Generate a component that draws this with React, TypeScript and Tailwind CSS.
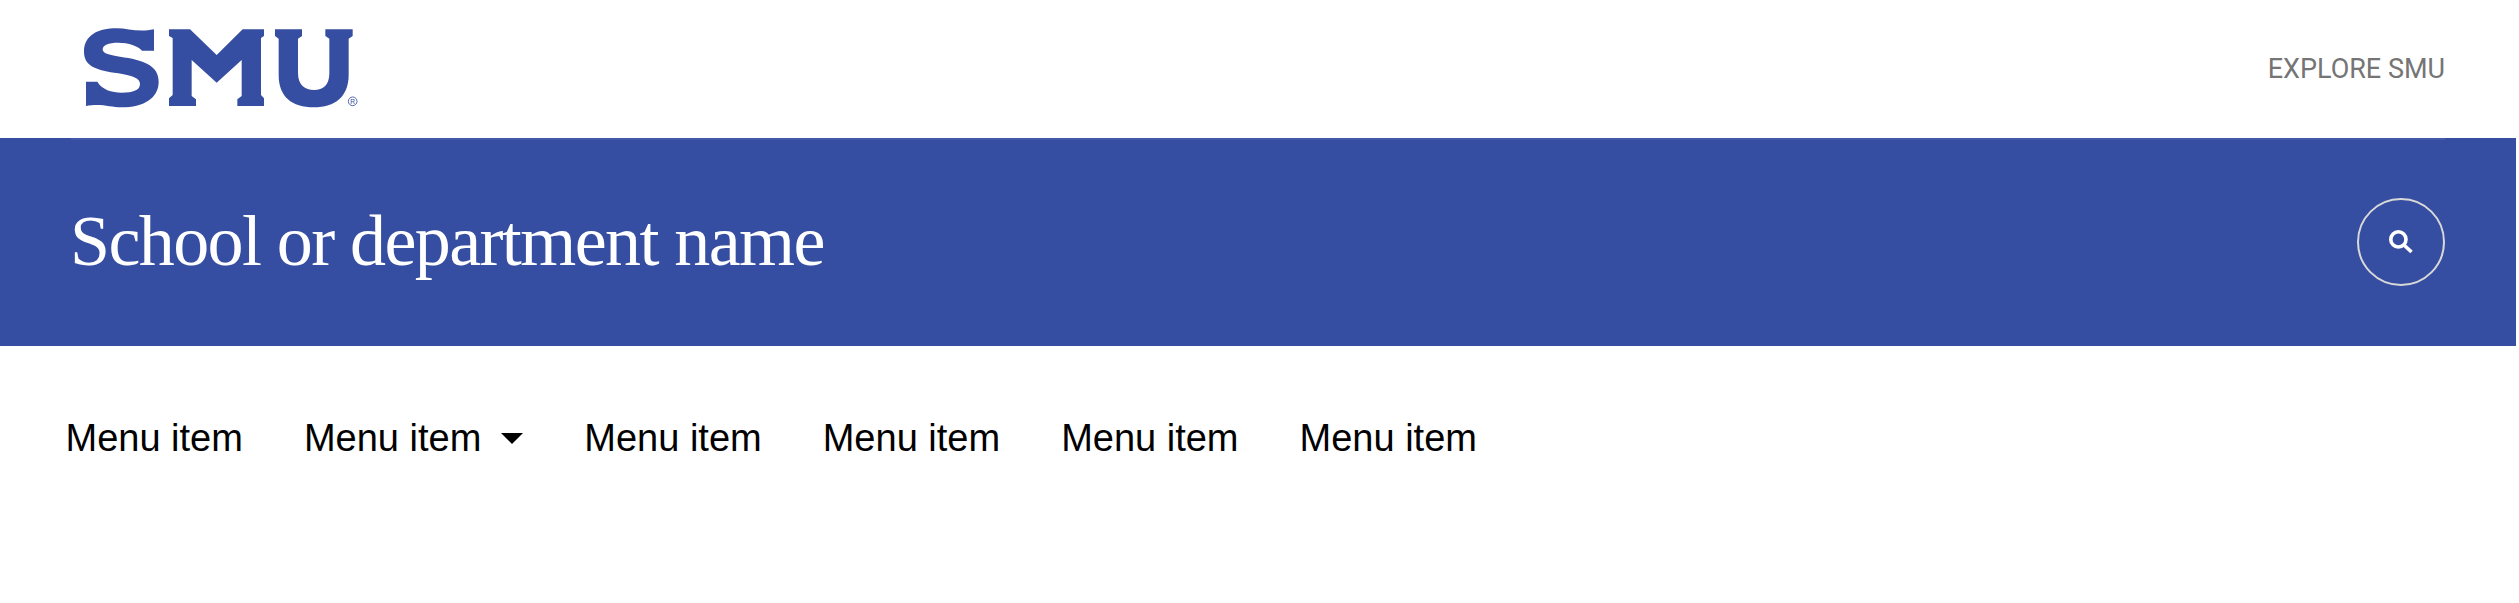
export default function App() {
  const items = ["Menu item", "Menu item", "Menu item", "Menu item", "Menu item", "Menu item"];
  return (
    <div className="h-[603px] w-[2519px] bg-white overflow-hidden">
      <header className="h-[138px] flex items-center justify-between pl-[60px] pr-[74px]">
        <svg width="320" height="130" viewBox="0 0 960 390" className="mt-[12px]" aria-label="SMU logo">
          <g fill="#364ea1">
            <path d="M72 125C72 75 115 55 170 55C205 55 235 68 282 58L282 122L246 122C235 108 205 98 175 98C145 98 128 105 128 118C128 130 145 135 180 140C250 150 296 165 296 215C296 265 250 292 185 292C150 292 125 280 78 288L78 215L112 215C125 238 155 248 185 248C220 248 240 240 240 222C240 205 220 198 175 190C110 180 72 170 72 125Z" />
            <path d="M327 58L390 58L470 135L548 58L612 58L612 78L603 84L603 255L612 265L612 288L532 288L532 268L545 258L545 150L470 218L395 150L395 258L408 268L408 288L327 288L327 265L338 255L338 84L327 78Z" />
            <path d="M645 58L726 58L726 78L714 86L714 190C714 225 735 240 762 240C790 240 808 225 808 190L808 86L796 78L796 58L878 58L878 78L866 86L866 195C866 260 825 292 762 292C695 292 656 260 656 195L656 86L645 78Z" />
          </g>
          <circle cx="878" cy="274" r="13" fill="none" stroke="#364ea1" strokeWidth="2.5" />
          <text x="878" y="281" textAnchor="middle" fontSize="20" fill="#364ea1" fontFamily="Liberation Sans">R</text>
        </svg>
        <a className="text-[27px] leading-none text-[#757575] font-['Roboto',sans-serif]">EXPLORE SMU</a>
      </header>
      <div className="h-[208px] w-[2516px] bg-[#364ea1] flex flex-col">
        <div className="h-[2px] mx-[71px] bg-[#4559a9]" />
        <div className="flex-1 flex items-center justify-between pl-[70px] pr-[71px]">
          <h1 className="text-[72px] leading-none tracking-[-1.6px] text-white font-normal mt-[-5px] font-['Liberation_Serif',serif]">School or department name</h1>
          <button className="w-[88px] h-[88px] rounded-full border-2 border-[#d8d8d8] flex items-center justify-center mt-[-2px]">
            <svg width="24" height="24" viewBox="0 0 24 24" fill="none" stroke="#fff" strokeWidth="3.6">
              <circle cx="9.4" cy="9.4" r="7.6" />
              <path d="M15 15L22.5 22" />
            </svg>
          </button>
        </div>
      </div>
      <nav className="flex items-center gap-[61px] pl-[65.5px] pt-[62px] text-[38px] leading-[60px] text-black font-['Liberation_Sans',Arial,sans-serif]">
        {items.map((t, i) => (
          <a key={i} className="flex items-center">
            {t}
            {i === 1 && <span className="ml-[20px] w-0 h-0 border-x-[11px] border-x-transparent border-t-[11px] border-t-black" />}
          </a>
        ))}
      </nav>
    </div>
  );
}
